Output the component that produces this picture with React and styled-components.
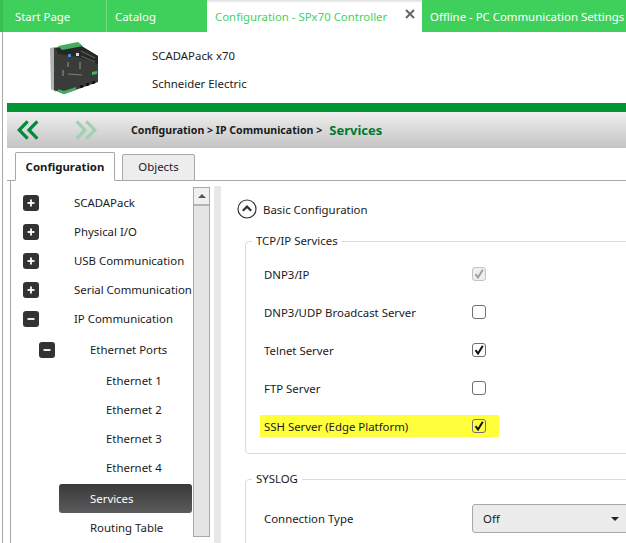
import React from "react";
import styled, { createGlobalStyle } from "styled-components";

const Global = createGlobalStyle`
  html, body { margin: 0; padding: 0; background: #fff; }
  body { font-family: "Noto Sans", "Open Sans", sans-serif; font-size: 11.4px; color: #1a1a1a; }
`;

const Page = styled.div`
  width: 626px;
  height: 543px;
  overflow: hidden;
  background: #fff;
`;

const TabBar = styled.div`
  display: flex;
  height: 32px;
  background: #3fd05c;
  border-left: 3px solid #39c053;
`;

const DocTab = styled.div`
  flex: ${(p) => (p.$w ? `0 0 ${p.$w}px` : "1")};
  display: flex;
  align-items: center;
  justify-content: space-between;
  box-sizing: border-box;
  padding: 0 ${(p) => (p.$active ? "7px" : "0")} 0 ${(p) => p.$pad}px;
  white-space: nowrap;
  overflow: hidden;
  color: ${(p) => (p.$active ? "#45d161" : "#fff")};
  background: ${(p) => (p.$active ? "linear-gradient(#dcdcdc 0, #fff 3px)" : "transparent")};
  border-right: ${(p) => (p.$divider ? "1px solid #6fdc84" : "none")};
`;

const CloseIcon = styled.svg`
  margin-bottom: 4px;
`;

const Body = styled.div`
  margin-left: 2px;
  border-left: 1px solid #a8a8a8;
  padding-left: 4px;
  height: 511px;
`;

const Device = styled.div`
  display: flex;
  height: 71px;
  align-items: center;
`;

const DevicePicture = styled.svg`
  width: 52px;
  height: 56px;
  margin: 0 0 0 41px;
  flex: none;
`;

const DeviceText = styled.div`
  margin: 4px 0 0 52px;
  display: flex;
  flex-direction: column;
  gap: 11px;
  line-height: 17px;
`;

const GreenRule = styled.div`
  height: 9px;
  background: #009530;
`;

const NavBar = styled.div`
  height: 36px;
  display: flex;
  align-items: center;
  background: linear-gradient(#eeeeee, #c4c4c4);
`;

const NavIcons = styled.div`
  display: flex;
  gap: 34px;
  margin-left: 10px;
  width: 114px;
`;

const Crumbs = styled.div`
  font-weight: 700;
  font-size: 10.6px;
  white-space: nowrap;
  display: flex;
  align-items: center;
`;

const Current = styled.span`
  color: #00792b;
  font-size: 13px;
  margin-left: 7px;
`;

const TabStrip = styled.div`
  display: flex;
  height: 32px;
  padding-left: 8px;
  gap: 7px;
  align-items: flex-end;
  border-bottom: 1px solid #a8a8a8;
`;

const ViewTab = styled.div`
  box-sizing: border-box;
  width: ${(p) => p.$w}px;
  height: ${(p) => (p.$active ? 29 : 27)}px;
  margin-bottom: -1px;
  padding-bottom: ${(p) => (p.$active ? 0 : 2)}px;
  display: flex;
  align-items: center;
  justify-content: center;
  border: 1px solid #a8a8a8;
  border-bottom: ${(p) => (p.$active ? "1px solid #fff" : "1px solid #a8a8a8")};
  border-radius: 2px 2px 0 0;
  background: ${(p) => (p.$active ? "#fff" : "#ededed")};
  font-weight: ${(p) => (p.$active ? 700 : 400)};
`;

const Split = styled.div`
  display: flex;
  height: 363px;
  margin-left: 3px;
`;

const TreePane = styled.div`
  width: 183px;
  flex: none;
  box-sizing: border-box;
  border-left: 1px solid #a8a8a8;
  padding-top: 7px;
`;

const TreeRow = styled.div`
  display: flex;
  align-items: center;
  height: ${(p) => p.$h || 29}px;
  padding-left: ${(p) => p.$indent}px;
  white-space: nowrap;
`;

const Expander = styled.span`
  width: 16px;
  height: 16px;
  flex: none;
  border-radius: 3px;
  background: #333;
  display: flex;
  align-items: center;
  justify-content: center;
  margin-right: ${(p) => p.$gap}px;
`;

const Selected = styled.div`
  display: flex;
  align-items: center;
  box-sizing: border-box;
  height: 29px;
  width: 133px;
  margin: 2px 0 0 48px;
  padding-left: 31px;
  border-radius: 3px;
  color: #fff;
  background: linear-gradient(#393939, #5c5c5e);
`;

const Scrollbar = styled.div`
  width: 17px;
  height: 350px;
  margin-top: 6px;
  flex: none;
  box-sizing: border-box;
  border: 1px solid #a8a8a8;
  background: #e5e5e5;
`;

const ScrollUp = styled.div`
  height: 16px;
  border-bottom: 2px solid #b4b4b4;
  background: #f0f0f0;
  display: flex;
  align-items: center;
  justify-content: center;
  &::before {
    content: "";
    border: 4px solid transparent;
    border-top: 0;
    border-bottom: 4px solid #555;
  }
`;

const Gutter = styled.div`
  width: 7px;
  margin: 5px 0 0 4px;
  flex: none;
  background: #e8e8e8;
`;

const Content = styled.div`
  flex: 1;
  min-width: 0;
  padding: 18px 0 0 16px;
  overflow: hidden;
`;

const Collapse = styled.div`
  display: flex;
  align-items: center;
  gap: 6px;
  height: 20px;
  margin-bottom: 14px;
`;

const Group = styled.fieldset`
  width: 430px;
  margin: 0 0 17px 8px;
  padding: ${(p) => (p.$tight ? "17px" : "14px")} 0 0 0;
  height: ${(p) => p.$h}px;
  box-sizing: border-box;
  border: 1px solid #d4dde3;
  border-radius: 4px;
  min-width: 0;
`;

const Legend = styled.legend`
  margin-left: 6px;
  padding: 0 4px;
  line-height: 16px;
`;

const FieldList = styled.div`
  display: flex;
  flex-direction: column;
  gap: 16px;
`;

const Field = styled.div`
  display: flex;
  align-items: center;
  height: 22px;
  width: 239px;
  margin-left: 14px;
  padding-left: 4px;
  box-sizing: border-box;
  background: ${(p) => (p.$mark ? "#ffff3c" : "transparent")};
`;

const FieldLabel = styled.span`
  width: 208px;
  flex: none;
  white-space: nowrap;
`;

const Box = styled.span`
  width: 14px;
  height: 14px;
  box-sizing: border-box;
  border: 1px solid ${(p) => (p.$off ? "#c4c4c4" : "#707070")};
  border-radius: 3px;
  background: ${(p) => (p.$off ? "#eeeeee" : p.$mark ? "transparent" : "#fff")};
  display: flex;
  align-items: center;
  justify-content: center;
`;

const SelectRow = styled.div`
  display: flex;
  align-items: center;
  margin-left: 18px;
`;

const Select = styled.div`
  width: 170px;
  height: 29px;
  flex: none;
  box-sizing: border-box;
  border: 1px solid #a8a8a8;
  border-radius: 3px;
  background: #ececec;
  display: flex;
  align-items: center;
  justify-content: space-between;
  padding: 0 22px 0 10px;
  &::after {
    content: "";
    border: 4px solid transparent;
    border-bottom: 0;
    border-top: 4px solid #222;
  }
`;

const Chevrons = ({ dir, color }) => (
  <svg width="23" height="20" viewBox="0 0 26 22" fill="none" stroke={color} strokeWidth="3.6" preserveAspectRatio="none">
    {dir === "left" ? (
      <path d="M12 1.5 2.5 11 12 20.5M23 1.5 13.5 11 23 20.5" />
    ) : (
      <path d="M3 1.5 12.5 11 3 20.5M14 1.5 23.5 11 14 20.5" />
    )}
  </svg>
);

const Toggle = ({ open, gap }) => (
  <Expander $gap={gap}>
    <svg width="8" height="8" viewBox="0 0 8 8" stroke="#fff" strokeWidth="1.8">
      <path d="M0.5 4h7" />
      {!open && <path d="M4 0.5v7" />}
    </svg>
  </Expander>
);

const Tick = ({ color = "#111" }) => (
  <svg width="10" height="10" viewBox="0 0 10 10" fill="none" stroke={color} strokeWidth="2">
    <path d="M1.5 5.2 4 8.5 8.8 0.8" />
  </svg>
);

// controller photo, redrawn by hand: silver rail on the left, dark housing, green terminals
const Controller = () => (
  <DevicePicture viewBox="0 0 52 56">
    <path d="M2 8 8 7 8 52 3 49z" fill="#aeb2b2" />
    <path d="M6 8 30 4 50 16V42L16 54 6 50z" fill="#3a3c3a" />
    <path d="M8 8 30 4 50 16 50 24 30 17 10 14z" fill="#262826" />
    <path d="M10 6 30 2 35 6 14 10z" fill="#47ad5e" />
    <path d="M10 52 16 54 28 50 28 47 16 51 10 49z" fill="#47ad5e" />
    <path d="M20 14h3v3h-3z" fill="#4d86cf" />
    <path d="M28 13h3v3h-3z" fill="#d7dcdc" />
    <path d="M33 11l14 7M33 16l14 6" stroke="#5b5f5b" strokeWidth="1.3" />
    <path d="M20 34l14 1" stroke="#7b807b" strokeWidth="1.2" />
    <path d="M44 32l5-1v3l-5 1z" fill="#4eb35f" />
    <path d="M32 47l3-1M38 45l3-1M44 43l3-1" stroke="#0e0e0e" strokeWidth="2.5" />
    <path d="M20 22v5M32 22v7M15 30v6" stroke="#858a85" strokeWidth="1.2" />
  </DevicePicture>
);

const services = [
  { label: "DNP3/IP", checked: true, off: true },
  { label: "DNP3/UDP Broadcast Server" },
  { label: "Telnet Server", checked: true },
  { label: "FTP Server" },
  { label: "SSH Server (Edge Platform)", checked: true, mark: true },
];

export default function App() {
  return (
    <Page>
      <Global />
      <TabBar>
        <DocTab $w={104} $pad={12} $divider>Start Page</DocTab>
        <DocTab $w={100} $pad={8}>Catalog</DocTab>
        <DocTab $w={215} $pad={8} $active>
          Configuration - SPx70 Controller
          <CloseIcon width="10" height="10" viewBox="0 0 10 10" stroke="#666" strokeWidth="2">
            <path d="M1 1l8 8M9 1l-8 8" />
          </CloseIcon>
        </DocTab>
        <DocTab $pad={8}>Offline - PC Communication Settings</DocTab>
      </TabBar>
      <Body>
        <Device>
          <Controller />
          <DeviceText>
            <span>SCADAPack x70</span>
            <span>Schneider Electric</span>
          </DeviceText>
        </Device>
        <GreenRule />
        <NavBar>
          <NavIcons>
            <Chevrons dir="left" color="#008a3a" />
            <Chevrons dir="right" color="#9fd3ae" />
          </NavIcons>
          <Crumbs>
            Configuration &gt; IP Communication &gt;
            <Current>Services</Current>
          </Crumbs>
        </NavBar>
        <TabStrip>
          <ViewTab $active $w={100}>Configuration</ViewTab>
          <ViewTab $w={73}>Objects</ViewTab>
        </TabStrip>
        <Split>
          <TreePane>
            <TreeRow $indent={12}><Toggle gap={35} />SCADAPack</TreeRow>
            <TreeRow $indent={12}><Toggle gap={35} />Physical I/O</TreeRow>
            <TreeRow $indent={12}><Toggle gap={35} />USB Communication</TreeRow>
            <TreeRow $indent={12}><Toggle gap={35} />Serial Communication</TreeRow>
            <TreeRow $indent={12}><Toggle open gap={35} />IP Communication</TreeRow>
            <TreeRow $indent={28} $h={33}><Toggle open gap={35} />Ethernet Ports</TreeRow>
            <TreeRow $indent={95}>Ethernet 1</TreeRow>
            <TreeRow $indent={95}>Ethernet 2</TreeRow>
            <TreeRow $indent={95}>Ethernet 3</TreeRow>
            <TreeRow $indent={95}>Ethernet 4</TreeRow>
            <Selected>Services</Selected>
            <TreeRow $indent={79}>Routing Table</TreeRow>
          </TreePane>
          <Scrollbar><ScrollUp /></Scrollbar>
          <Gutter />
          <Content>
            <Collapse>
              <svg width="20" height="20" viewBox="0 0 20 20" fill="none" stroke="#333">
                <circle cx="10" cy="10" r="9" strokeWidth="1.2" />
                <path d="M5.8 11.8 10 7.6l4.2 4.2" strokeWidth="2.2" />
              </svg>
              Basic Configuration
            </Collapse>
            <Group $h={221}>
              <Legend>TCP/IP Services</Legend>
              <FieldList>
                {services.map((s) => (
                  <Field key={s.label} $mark={s.mark}>
                    <FieldLabel>{s.label}</FieldLabel>
                    <Box $off={s.off} $mark={s.mark}>{s.checked && <Tick color={s.off ? "#a0a0a0" : "#111"} />}</Box>
                  </Field>
                ))}
              </FieldList>
            </Group>
            <Group $h={90} $tight>
              <Legend>SYSLOG</Legend>
              <SelectRow>
                <FieldLabel>Connection Type</FieldLabel>
                <Select>Off</Select>
              </SelectRow>
            </Group>
          </Content>
        </Split>
      </Body>
    </Page>
  );
}
